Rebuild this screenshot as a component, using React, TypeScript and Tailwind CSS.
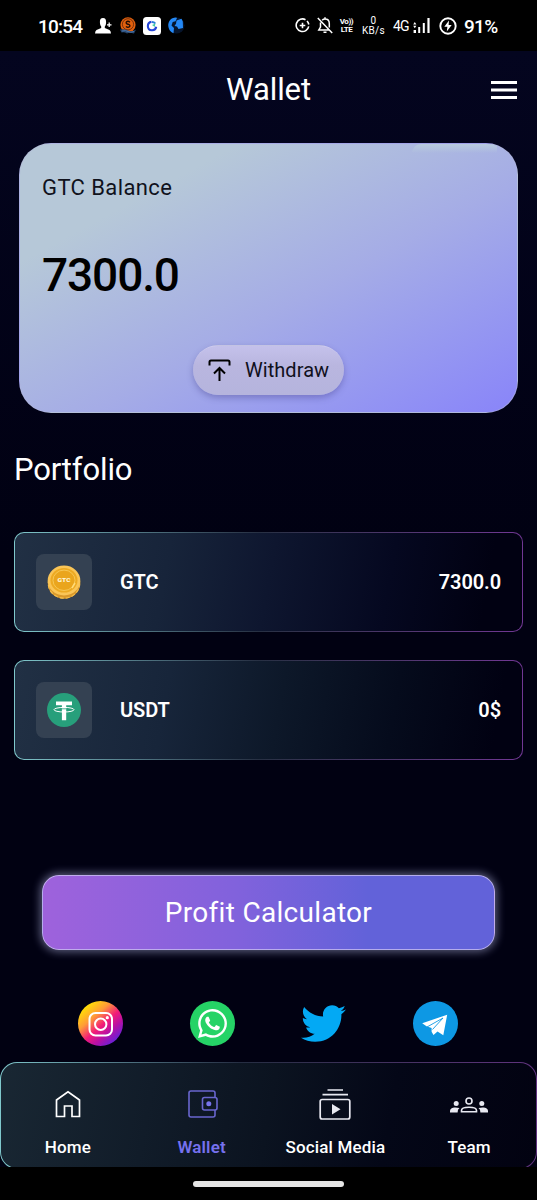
import type { ReactNode } from "react";
import { FaTwitter, FaWhatsapp } from "react-icons/fa";

function StatusBar() {
  return (
    <div className="flex h-[51px] items-center bg-black text-white">
      <div className="ml-[38px] w-[46px] whitespace-nowrap pt-0.5 text-[19px] font-medium leading-none tracking-[-0.8px]">
        10:54
      </div>
      <svg className="ml-[11px] h-4 w-[17px]" viewBox="0 0 17 16" fill="white">
        <path d="M8 0C5.700 0 4.800 1.500 4.900 4.200C5 6.500 5.500 7.600 6.200 8.500V10L1.500 12Q.2 12.700 0 15.500H16Q15.800 12.700 14.500 12L9.800 10V8.500C10.600 7.600 11 6.500 11.100 4.200C11.200 1.500 10.300 0 8 0Z" />
        <path d="M14.200 4.500V9M12 6.800H16.500" stroke="white" strokeWidth="1.300" />
      </svg>
      <svg className="ml-2 h-[17px] w-4" viewBox="0 0 16 17">
        <circle cx="8" cy="7.800" r="7.600" fill="#e2600d" />
        <circle cx="8" cy="7.300" r="5.600" fill="none" stroke="#5a240c" strokeWidth=".8" />
        <path d="M10 5.200Q8 3.500 6.400 5Q5.500 6.600 8 7.200Q10.500 8 9.700 9.500Q8 11 5.900 9.500" fill="none" stroke="#220d05" strokeWidth="1.400" />
        <path d="M0 12.500Q4 11.500 8 13.500T16 12.500L14 16.500Q9 15 7 16.500Q4 14.500 1.500 15.500Z" fill="#26466e" />
        <path d="M2 14Q6 13 8 14.500T14 14.500" fill="none" stroke="#5e8cc5" strokeWidth=".7" />
      </svg>
      <svg className="ml-[7px] h-[18px] w-[18px]" viewBox="0 0 18 18">
        <rect width="18" height="18" rx="3.500" fill="white" />
        <path d="M8.500 4.900A4.200 4.200 0 1 0 13.200 9.800" fill="none" stroke="#2445d8" strokeWidth="2.100" />
        <path d="M9 4.900A4.200 4.200 0 0 1 12.300 6.500" fill="none" stroke="#297ed9" strokeWidth="2" />
        <path d="M9 8L12.500 6.500L11.700 10Z" fill="#40cda2" />
      </svg>
      <svg className="ml-[7px] h-[17px] w-[17px]" viewBox="0 0 17 17">
        <circle cx="8.500" cy="8.500" r="8" fill="#06152d" />
        <path d="M8 .4C2.500.4 0 4.800.3 9C.6 12.500 3 15.600 5.500 16.200L6 11L3.500 8.500L4.700 5L7.500 4.200L9 1Z" fill="#2488f5" />
        <path d="M8.500 3.500L13.500 1.800L14.800 4.500L15 11L10.500 12L9 9.500L6.500 9L8 6.800Z" fill="#2488f5" />
      </svg>

      <div className="ml-auto mr-[39px] flex items-center">
        <svg className="h-[15px] w-[15px]" viewBox="0 0 15 15" fill="none" stroke="white" strokeWidth="1.600">
          <path d="M10.500 1.700A6.300 6.300 0 1 0 13.700 8.300M12 3A6.300 6.300 0 0 1 13.800 6.500" />
          <path d="M7.500 4.700V10.300M4.700 7.500H10.300" />
        </svg>
        <svg className="ml-[7px] h-[17px] w-4" viewBox="0 0 16 17" fill="none" stroke="white" strokeWidth="1.500">
          <path d="M3.500 5.500V10L1.800 13H12M5.200 3.200C6 2.300 7 2 8 2C10.700 2 12.300 4 12.300 6.500V10.500M8 .3V2M6.500 15.300H9.500M.8 1L15.200 16" />
        </svg>
        <div className="ml-[6px] w-[15px] whitespace-nowrap text-center text-[8px] font-bold leading-[8px] tracking-[-0.4px]">
          <div>Vo))</div>
          <div>LTE</div>
        </div>
        <div className="ml-2 w-[23px] text-center text-[10px] leading-[10px] tracking-[0.3px]">
          <div>0</div>
          <div>KB/s</div>
        </div>
        <div className="ml-2 w-4 text-[14px] leading-none tracking-[-0.9px]">4G</div>
        <svg className="ml-1 h-[15px] w-[17px]" viewBox="0 0 17 15" fill="white">
          <path d="M5.200 9H7.200V15H5.200ZM9.800 5H11.800V15H9.800ZM14.400 0H16.600V15H14.400ZM.6 12H3V15H.6ZM.2 6.500L1.800 4L3.400 6.500ZM.2 7.800H3.400L1.800 10.300Z" />
        </svg>
        <svg className="ml-[9px] h-[18px] w-[18px]" viewBox="0 0 18 18">
          <circle cx="9" cy="9" r="7.700" fill="none" stroke="white" strokeWidth="1.900" />
          <path d="M10 3.500L5.300 9.800H8.400L7.800 14.500L12.700 8H9.600Z" fill="white" />
        </svg>
        <div className="ml-[7px] w-[34px] whitespace-nowrap pt-0.5 text-[19px] font-medium leading-none tracking-[-0.7px]">
          91%
        </div>
      </div>
    </div>
  );
}

function BalanceCard() {
  return (
    <div className="mx-[19px] mt-[15px] flex h-[270px] flex-col overflow-hidden rounded-[32px] border border-[#b3b7dc]/50 bg-linear-to-br from-[#b6c8d8] from-22% via-[#a5ace6] via-57% to-[#8984f9] text-black">
      <div className="ml-[392px] h-[9px] w-[85px] rounded-tl-full bg-linear-to-b from-[#b8cbdd] to-[#a9b4e2]/0" />
      <div className="ml-[22px] mt-[22px] text-[22px] leading-[26px] tracking-[0.4px] text-[#10121c]">GTC Balance</div>
      <div className="ml-[22px] mt-[47px] text-[46px] font-medium leading-[54px] tracking-[-1.1px]">7300.0</div>
      <button className="mx-auto mt-[43px] flex h-[50px] w-[151px] shrink-0 items-center rounded-full border-t border-white/20 bg-linear-to-b from-[#c4c1eb] via-[#b9b6df] via-40% to-[#b5b4dd] shadow-[0_3px_6px_rgba(60,55,130,0.35)]">
        <svg className="ml-[15px] h-[23px] w-[23px]" viewBox="0 0 23 23" fill="none" stroke="black" strokeWidth="2">
          <path d="M1.500 6.500V3Q1.500 1.500 3 1.500H20Q21.500 1.500 21.500 3V6.500M11.500 22V9.500M6 14.500L11.500 9L17 14.500" />
        </svg>
        <span className="mb-px ml-[14px] text-[20px] leading-none tracking-[0.05px] text-[#10101c]">Withdraw</span>
      </button>
    </div>
  );
}

function GtcCoin() {
  return (
    <svg className="h-[34px] w-[34px]" viewBox="0 0 34 34">
      <ellipse cx="17" cy="18.500" rx="16.200" ry="15.300" fill="#d9982b" />
      <ellipse cx="17" cy="18.500" rx="15.700" ry="14.700" fill="none" stroke="#f3bd4b" strokeWidth="1.200" strokeDasharray="4 2" />
      <ellipse cx="17" cy="15.500" rx="16.300" ry="15" fill="#fac557" />
      <ellipse cx="17" cy="15.300" rx="13.500" ry="12.300" fill="#edaa22" />
      <ellipse cx="17" cy="15.300" rx="11" ry="10.200" fill="#eaa51d" stroke="#f9ce62" strokeWidth=".8" />
      <path d="M25 23L28 18" stroke="#ffdb79" strokeWidth="1.500" />
      <text
        x="17"
        y="17.400"
        textAnchor="middle"
        fontSize="6"
        fontWeight="900"
        textLength="13"
        lengthAdjust="spacingAndGlyphs"
        fill="#fff6d8"
      >
        GTC
      </text>
    </svg>
  );
}

function TetherCoin() {
  return (
    <svg className="h-[34px] w-[34px]" viewBox="0 0 34 34">
      <circle cx="17" cy="17" r="17" fill="#279f7b" />
      <path d="M9 8.500H25V12.300H19.200V27.200H14.900V12.300H9Z" fill="white" />
      <ellipse cx="17" cy="16.700" rx="10" ry="2.300" fill="none" stroke="white" strokeWidth="1" />
      <path d="M14.900 15.800H19.200" stroke="#279f7b" strokeWidth=".8" />
    </svg>
  );
}

interface AssetProps {
  icon: ReactNode;
  name: string;
  amount: string;
  fill: string;
}

function AssetRow({ icon, name, amount, fill }: AssetProps) {
  return (
    <div className="mx-[14px] h-[100px] rounded-[10px] bg-linear-to-r from-[#80c9cd] via-[#273043] via-48% to-[#713794] p-px">
      <div className={`flex h-full items-center rounded-[9px] pl-[21px] pr-[21px] text-[20px] font-semibold text-white ${fill}`}>
        <div className="flex h-14 w-14 items-center justify-center rounded-lg bg-[#344152]">{icon}</div>
        <span className="ml-7 tracking-[-0.1px]">{name}</span>
        <span className="ml-auto tracking-[-0.1px]">{amount}</span>
      </div>
    </div>
  );
}

function SocialLinks() {
  return (
    <div className="mt-[51px] flex h-[45px] items-center justify-between pl-[78px] pr-[79px]">
      <svg className="h-[45px] w-[45px]" viewBox="0 0 45 45">
        <defs>
          <linearGradient id="insta" x1=".15" y1=".1" x2=".85" y2=".9">
            <stop offset="0" stopColor="#ffe500" />
            <stop offset=".3" stopColor="#ff9b38" />
            <stop offset=".55" stopColor="#f21b78" />
            <stop offset=".75" stopColor="#b710a5" />
            <stop offset="1" stopColor="#6222dc" />
          </linearGradient>
        </defs>
        <circle cx="22.500" cy="22.500" r="22.500" fill="url(#insta)" />
        <g fill="none" stroke="white" strokeWidth="2">
          <rect x="11.500" y="12" width="22.500" height="22.500" rx="6" />
          <circle cx="22.700" cy="23.200" r="5.700" />
        </g>
        <circle cx="29.300" cy="16.700" r="1.600" fill="white" />
      </svg>
      <div className="flex h-[45px] w-[45px] items-center justify-center rounded-full bg-[#25d366]">
        <FaWhatsapp className="h-[33px] w-[33px] text-white" />
      </div>
      <FaTwitter className="h-[45px] w-[45px] text-[#03a9f4]" />
      <svg className="h-[45px] w-[45px]" viewBox="0 0 45 45">
        <circle cx="22.500" cy="22.500" r="22.500" fill="#0d98e4" />
        <path d="M9.200 22.300L34.200 13.700L30.300 34.200L24.500 30.500L20.500 34L18.600 30.700V27L13.500 25.300Z" fill="white" />
        <path d="M14 26L30 17L19.500 28.500" fill="none" stroke="#0d98e4" strokeWidth=".9" />
      </svg>
    </div>
  );
}

function NavItem({ label, active, children }: { label: string; active?: boolean; children: ReactNode }) {
  return (
    <div className={`flex flex-1 flex-col items-center text-[17px] leading-5 tracking-[0.15px] ${active ? "font-semibold text-[#7671ee]" : "font-medium text-white"}`}>
      <div className="mt-6 flex h-[34px] items-center justify-center">{children}</div>
      <div className="mt-4 whitespace-nowrap">{label}</div>
    </div>
  );
}

function BottomNav() {
  return (
    <div className="mt-4 h-[105px] overflow-hidden">
      <div className="h-[107px] rounded-[17px] bg-linear-to-r from-[#80c9cd] via-[#252d42] via-45% to-[#61337f] p-px">
        <div className="flex h-full rounded-2xl bg-linear-[100deg,#192733,#111c29_28%,#0b1320_50%,#040717_72%,#020211]">
          <NavItem label="Home">
            <svg className="h-[28px] w-[26px]" viewBox="0 0 26 28" fill="none" stroke="white" strokeWidth="1.700">
              <path d="M1.500 10L13 1.800L24.500 10V26.500H17V16H9.500V26.500H1.500Z" />
            </svg>
          </NavItem>
          <NavItem label="Wallet" active>
            <svg className="ml-0.5 h-[30px] w-[30px]" viewBox="0 0 30 30" fill="none" stroke="#6966ce" strokeWidth="1.600">
              <path d="M27 8V4Q27 2 25 2H3Q1 2 1 4V26Q1 28 3 28H25Q27 28 27 26V21" />
              <rect x="14.500" y="8.500" width="14.500" height="12.500" rx="2" />
              <circle cx="20.800" cy="14.800" r="2.500" fill="#7773eb" stroke="none" />
            </svg>
          </NavItem>
          <NavItem label="Social Media">
            <svg className="h-[32px] w-[32px]" viewBox="0 0 32 32" fill="none" stroke="#e8e9f1" strokeWidth="1.700">
              <path d="M8.500 2H24M3.500 6.700H29" />
              <rect x="1.200" y="11.500" width="29.600" height="19.500" rx="2" />
              <path d="M13 16L21.500 21.300L13 26.500Z" fill="#e8e9f1" stroke="none" />
            </svg>
          </NavItem>
          <NavItem label="Team">
            <svg className="mt-0.5 h-4 w-[38px]" viewBox="0 0 38 16" fill="#e8e9f1">
              <circle cx="6.200" cy="6.500" r="2.500" />
              <circle cx="31.800" cy="6.500" r="2.500" />
              <path d="M0 15.500V14Q0 11.300 4 10.600Q6 10.200 9.500 11Q7.500 12.300 7.600 15.500ZM38 15.500V14Q38 11.300 34 10.600Q32 10.200 28.500 11Q30.500 12.300 30.400 15.500Z" />
              <g fill="none" stroke="#e8e9f1" strokeWidth="1.600">
                <circle cx="19" cy="4" r="3" />
                <path d="M11.500 14.800V13.500Q11.500 10.300 19 10.300T26.500 13.500V14.800Z" />
              </g>
            </svg>
          </NavItem>
        </div>
      </div>
    </div>
  );
}

export default function App() {
  return (
    <div className="flex h-[1200px] w-[537px] flex-col overflow-hidden bg-[#010112] font-[Roboto,sans-serif]">
      <StatusBar />
      <div className="flex flex-1 flex-col bg-linear-to-b from-[#04051f] via-[#010112] via-45% to-[#010112]">
        <header className="grid h-[77px] grid-cols-[1fr_auto_1fr] items-center px-5 text-white">
          <span />
          <h1 className="text-[31px] leading-none tracking-[-0.1px]">Wallet</h1>
          <svg className="h-[18px] w-[26px] justify-self-end" viewBox="0 0 26 18" fill="white">
            <path d="M0 0H26V3H0ZM0 7.500H26V10.500H0ZM0 15H26V18H0Z" />
          </svg>
        </header>
        <BalanceCard />

        <h2 className="ml-[14px] mt-[39px] text-[31px] leading-9 tracking-[-0.15px] text-white">Portfolio</h2>
        <div className="mt-11 flex flex-col gap-7">
          <AssetRow
            icon={<GtcCoin />}
            name="GTC"
            amount="7300.0"
            fill="bg-linear-[100deg,#213044,#17243a_30%,#0e162f_50%,#050820_73%,#010112_92%]"
          />
          <AssetRow
            icon={<TetherCoin />}
            name="USDT"
            amount="0$"
            fill="bg-linear-[100deg,#213044,#17253a_30%,#0d1829_52%,#050b1c_74%,#010112_94%]"
          />
        </div>

        <button className="mx-[42px] mt-[115px] h-[75px] shrink-0 rounded-[17px] border-[1.5px] border-[#c9bff0]/80 bg-linear-to-r from-[#9e62dc] via-[#8162dc] via-43% to-[#6262d9] to-72% text-[28px] tracking-[0.3px] text-white shadow-[0_0_9px_2px_rgba(190,195,240,0.48)]">
          Profit Calculator
        </button>
        <SocialLinks />
        <BottomNav />
      </div>
      <div className="flex h-[33px] items-center justify-center bg-black">
        <div className="h-[6px] w-[151px] rounded-full bg-[#e6e6e6]" />
      </div>
    </div>
  );
}
